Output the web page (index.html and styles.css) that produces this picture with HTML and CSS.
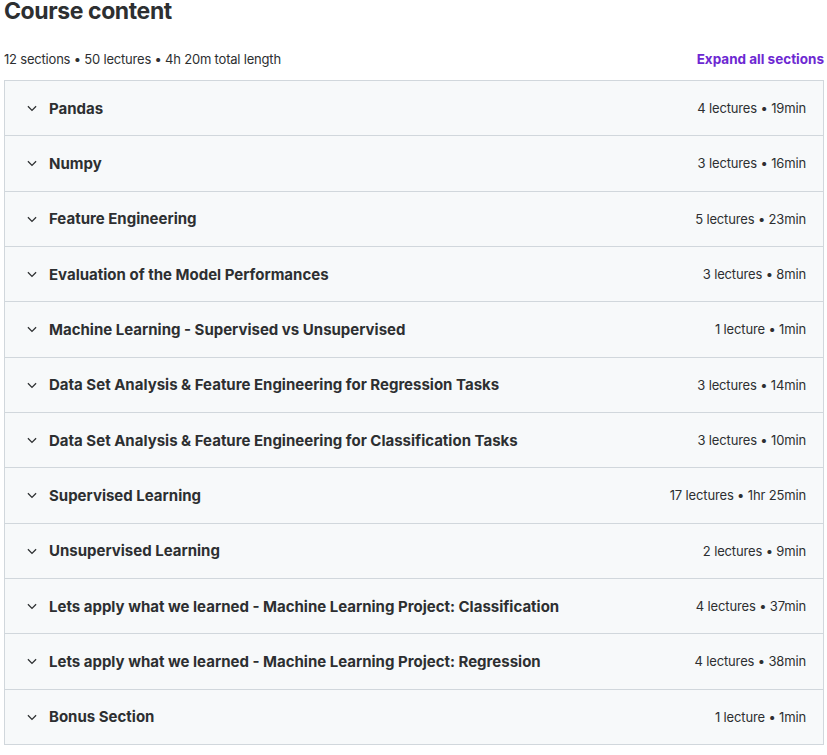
FILE: index.html
```html
<!DOCTYPE html>
<html>
<head>
    <meta charset="utf-8" />
    <title>Course content</title>
    <link rel="stylesheet" href="styles.css">
</head>
<body>
    <div class="curriculum">
        <h2 class="curriculum-title">Course content</h2>
        <div class="curriculum-summary">
            <span>12 sections • 50 lectures • 4h 20m total length</span>
            <span class="expand-all">Expand all sections</span>
        </div>
        <div class="section-list">
            <div class="section-item">
                <span class="chevron"><svg viewBox="0 0 12 12"><path d="M2.5 4.5 L6 8 L9.5 4.5" /></svg></span>
                <span class="section-name">Pandas</span>
                <span class="section-meta">4 lectures • 19min</span>
            </div>
            <div class="section-item">
                <span class="chevron"><svg viewBox="0 0 12 12"><path d="M2.5 4.5 L6 8 L9.5 4.5" /></svg></span>
                <span class="section-name">Numpy</span>
                <span class="section-meta">3 lectures • 16min</span>
            </div>
            <div class="section-item">
                <span class="chevron"><svg viewBox="0 0 12 12"><path d="M2.5 4.5 L6 8 L9.5 4.5" /></svg></span>
                <span class="section-name">Feature Engineering</span>
                <span class="section-meta">5 lectures • 23min</span>
            </div>
            <div class="section-item">
                <span class="chevron"><svg viewBox="0 0 12 12"><path d="M2.5 4.5 L6 8 L9.5 4.5" /></svg></span>
                <span class="section-name">Evaluation of the Model Performances</span>
                <span class="section-meta">3 lectures • 8min</span>
            </div>
            <div class="section-item">
                <span class="chevron"><svg viewBox="0 0 12 12"><path d="M2.5 4.5 L6 8 L9.5 4.5" /></svg></span>
                <span class="section-name">Machine Learning - Supervised vs Unsupervised</span>
                <span class="section-meta">1 lecture • 1min</span>
            </div>
            <div class="section-item">
                <span class="chevron"><svg viewBox="0 0 12 12"><path d="M2.5 4.5 L6 8 L9.5 4.5" /></svg></span>
                <span class="section-name">Data Set Analysis &amp; Feature Engineering for Regression Tasks</span>
                <span class="section-meta">3 lectures • 14min</span>
            </div>
            <div class="section-item">
                <span class="chevron"><svg viewBox="0 0 12 12"><path d="M2.5 4.5 L6 8 L9.5 4.5" /></svg></span>
                <span class="section-name">Data Set Analysis &amp; Feature Engineering for Classification Tasks</span>
                <span class="section-meta">3 lectures • 10min</span>
            </div>
            <div class="section-item">
                <span class="chevron"><svg viewBox="0 0 12 12"><path d="M2.5 4.5 L6 8 L9.5 4.5" /></svg></span>
                <span class="section-name">Supervised Learning</span>
                <span class="section-meta">17 lectures • 1hr 25min</span>
            </div>
            <div class="section-item">
                <span class="chevron"><svg viewBox="0 0 12 12"><path d="M2.5 4.5 L6 8 L9.5 4.5" /></svg></span>
                <span class="section-name">Unsupervised Learning</span>
                <span class="section-meta">2 lectures • 9min</span>
            </div>
            <div class="section-item">
                <span class="chevron"><svg viewBox="0 0 12 12"><path d="M2.5 4.5 L6 8 L9.5 4.5" /></svg></span>
                <span class="section-name">Lets apply what we learned - Machine Learning Project: Classification</span>
                <span class="section-meta">4 lectures • 37min</span>
            </div>
            <div class="section-item">
                <span class="chevron"><svg viewBox="0 0 12 12"><path d="M2.5 4.5 L6 8 L9.5 4.5" /></svg></span>
                <span class="section-name">Lets apply what we learned - Machine Learning Project: Regression</span>
                <span class="section-meta">4 lectures • 38min</span>
            </div>
            <div class="section-item">
                <span class="chevron"><svg viewBox="0 0 12 12"><path d="M2.5 4.5 L6 8 L9.5 4.5" /></svg></span>
                <span class="section-name">Bonus Section</span>
                <span class="section-meta">1 lecture • 1min</span>
            </div>
        </div>
    </div>
</body>
</html>
```

FILE: styles.css
```css
* {
    margin: 0;
    padding: 0;
    box-sizing: border-box;
}

body {
    background: #fff;
    color: #2d2f31;
    font-family: Inter, "Noto Sans", sans-serif;
}

.curriculum {
    padding: 0 3px 0 4px;
}

.curriculum-title {
    height: 38px;
    font-size: 23px;
    line-height: 22px;
    font-weight: 700;
    letter-spacing: -0.4px;
}

.curriculum-summary {
    display: flex;
    justify-content: space-between;
    align-items: center;
    height: 42px;
    font-size: 13px;
    letter-spacing: -0.2px;
}

.expand-all {
    color: #6d28d2;
    font-size: 13.5px;
    font-weight: 700;
    letter-spacing: 0;
}

.section-list {
    border: 1px solid #d1d7dc;
    border-top: none;
}

.section-item {
    display: flex;
    align-items: center;
    height: 55.33px;
    padding: 0 17px 0 20px;
    background: #f7f9fa;
    border-top: 1px solid #d1d7dc;
}

.chevron {
    display: flex;
    width: 14px;
    height: 14px;
    margin-right: 10px;
}

    .chevron svg {
        width: 14px;
        height: 14px;
        fill: none;
        stroke: #2d2f31;
        stroke-width: 1.1;
    }

.section-name {
    flex: 1;
    font-size: 15px;
    font-weight: 700;
}

.section-meta {
    font-size: 13px;
    letter-spacing: -0.15px;
}
```
